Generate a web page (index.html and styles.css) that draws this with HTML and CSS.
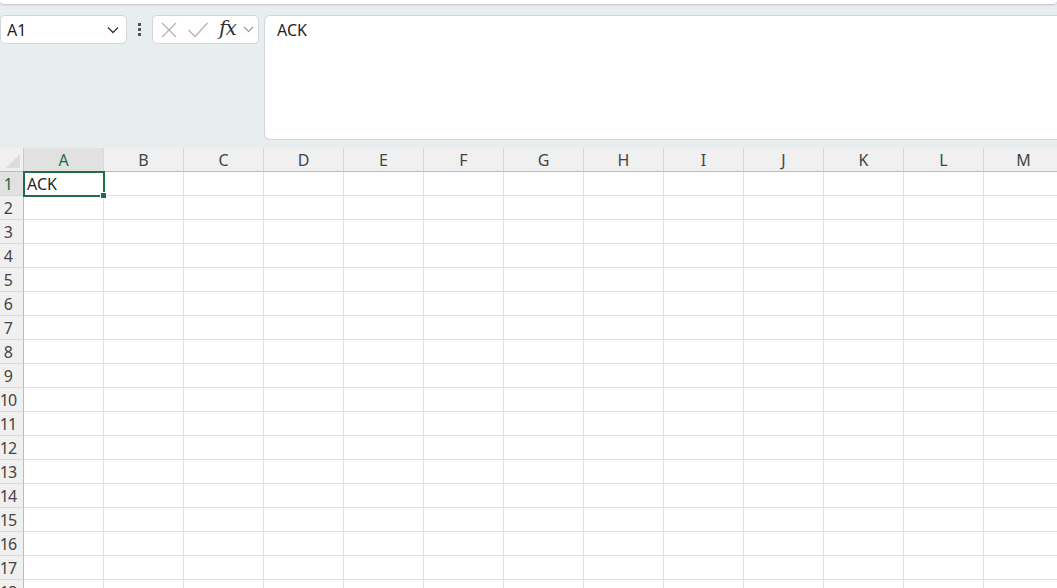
FILE: index.html
```html
<!DOCTYPE html>
<html lang="en">
  <head>
    <meta charset="UTF-8" />
    <meta name="viewport" content="width=device-width, initial-scale=1.0" />
    <title>Book1</title>
    <link rel="stylesheet" href="styles.css">
  </head>
  <body>
    <div class="ribbon-edge"></div>

    <div class="formula-area">
      <div class="name-box">
        <span>A1</span>
        <svg class="chevron" width="12" height="8" viewBox="0 0 12 8">
          <path d="M1 1.5 L6 6.5 L11 1.5" fill="none" stroke="#333" stroke-width="1.3" />
        </svg>
      </div>

      <div class="grip">
        <i></i><i></i><i></i>
      </div>

      <div class="formula-buttons">
        <svg width="18" height="18" viewBox="0 0 18 18">
          <path d="M2 2 L16 16 M16 2 L2 16" stroke="#b4b4b4" stroke-width="1.3" fill="none" />
        </svg>
        <svg width="22" height="18" viewBox="0 0 22 18">
          <path d="M1.5 9 L8 15.5 L20.5 2" stroke="#b4b4b4" stroke-width="1.3" fill="none" />
        </svg>
        <span class="fx">fx</span>
        <svg class="small-chevron" width="11" height="7" viewBox="0 0 11 7">
          <path d="M1 1 L5.5 5.5 L10 1" fill="none" stroke="#999" stroke-width="1.1" />
        </svg>
      </div>

      <div class="formula-input">ACK</div>
    </div>

    <div class="sheet" id="sheet"></div>

    <script>
      document.addEventListener("DOMContentLoaded", function () {
        const sheet = document.getElementById("sheet");
        const columns = "ABCDEFGHIJKLM".split("");

        // corner cell + column headers
        const corner = document.createElement("div");
        corner.className = "corner";
        sheet.appendChild(corner);

        columns.forEach((col, i) => {
          const head = document.createElement("div");
          head.className = "col-head" + (i === 0 ? " selected" : "");
          head.textContent = col;
          sheet.appendChild(head);
        });

        for (let row = 1; row <= 18; row++) {
          const rowHead = document.createElement("div");
          rowHead.className = "row-head" + (row === 1 ? " selected" : "");
          rowHead.textContent = row;
          sheet.appendChild(rowHead);

          columns.forEach((col, i) => {
            const cell = document.createElement("div");
            cell.className = "cell";
            if (row === 1 && i === 0) {
              cell.classList.add("active");
              cell.textContent = "ACK";
              const handle = document.createElement("span");
              handle.className = "fill-handle";
              cell.appendChild(handle);
            }
            sheet.appendChild(cell);
          });
        }
      });
    </script>
  </body>
</html>
```

FILE: styles.css
```css
body {
  margin: 0;
  padding: 0;
  font-family: "Noto Sans", "Open Sans", sans-serif;
  background-color: #e8edf0;
  overflow: hidden;
  height: 100vh;
}
.ribbon-edge {
  height: 4px;
  background-color: #fff;
  border-bottom-left-radius: 4px;
  border-bottom-right-radius: 4px;
  box-shadow: 0 1px 2px rgba(0, 0, 0, 0.18);
}
.formula-area {
  display: flex;
  align-items: flex-start;
  padding: 11px 0 9px 0;
  height: 124px;
}
.name-box {
  box-sizing: border-box;
  width: 127px;
  height: 29px;
  background-color: #fff;
  border: 1px solid #d2d6d9;
  border-radius: 5px;
  display: flex;
  align-items: center;
  justify-content: space-between;
  padding: 0 7px 0 6px;
  font-size: 16px;
  color: #1f1f1f;
}
.chevron {
  margin-top: 1px;
}
.grip {
  width: 25px;
  height: 29px;
  display: flex;
  flex-direction: column;
  align-items: center;
  justify-content: center;
  gap: 2px;
}
.grip i {
  display: block;
  width: 3px;
  height: 3px;
  background-color: #555;
}
.formula-buttons {
  box-sizing: border-box;
  width: 107px;
  height: 29px;
  background-color: #fff;
  border: 1px solid #d2d6d9;
  border-radius: 5px;
  display: flex;
  align-items: center;
  padding: 0 0 0 7px;
  gap: 9px;
}
.fx {
  font-family: "DejaVu Serif", "Liberation Serif", serif;
  font-style: italic;
  font-size: 20px;
  color: #333;
  margin-left: 1px;
  margin-top: -4px;
  letter-spacing: -1px;
}
.small-chevron {
  margin-left: -2px;
}
.formula-input {
  box-sizing: border-box;
  flex: 1;
  height: 125px;
  margin-left: 5px;
  background-color: #fff;
  border: 1px solid #d2d6d9;
  border-right: none;
  border-radius: 6px 0 0 6px;
  padding: 3px 12px;
  font-size: 16px;
  color: #1f1f1f;
}
.sheet {
  display: grid;
  grid-template-columns: 24px repeat(13, 80px);
  grid-auto-rows: 24px;
  background-color: #fff;
  color: #1f1f1f;
}
.corner,
.col-head,
.row-head,
.cell {
  box-sizing: border-box;
}
.corner {
  background-color: #f0f0f0;
  border-right: 1px solid #c8c8c8;
  border-bottom: 1px solid #bcbcbc;
  position: relative;
  overflow: hidden;
}
.corner::after {
  content: "";
  position: absolute;
  right: 3px;
  bottom: 3px;
  border-left: 14px solid transparent;
  border-bottom: 14px solid #dcdcdc;
}
.col-head {
  background-color: #f0f0f0;
  border-right: 1px solid #d8d8d8;
  border-bottom: 1px solid #bcbcbc;
  text-align: center;
  font-size: 16px;
  line-height: 24px;
  color: #444;
}
.col-head.selected {
  background-color: #e1e1e1;
  color: #1d6b46;
  border-bottom-color: #a9a9a9;
}
.row-head {
  background-color: #f0f0f0;
  border-right: 1px solid #bcbcbc;
  border-bottom: 1px solid #d8d8d8;
  font-size: 16px;
  line-height: 24px;
  color: #444;
  text-align: center;
  white-space: nowrap;
  text-indent: -7px;
  letter-spacing: -0.8px;
}
.row-head.selected {
  background-color: #e1e1e1;
  color: #1d6b46;
}
.cell {
  border-right: 1px solid #e1e1e1;
  border-bottom: 1px solid #e1e1e1;
  font-size: 16px;
  line-height: 24px;
  padding-left: 3px;
  position: relative;
}
.cell.active {
  outline: 2px solid #1e6e43;
  outline-offset: -1px;
  z-index: 1;
}
.fill-handle {
  position: absolute;
  right: -4px;
  bottom: -4px;
  width: 5px;
  height: 5px;
  background-color: #1e6e43;
  border: 1px solid #fff;
}
```
